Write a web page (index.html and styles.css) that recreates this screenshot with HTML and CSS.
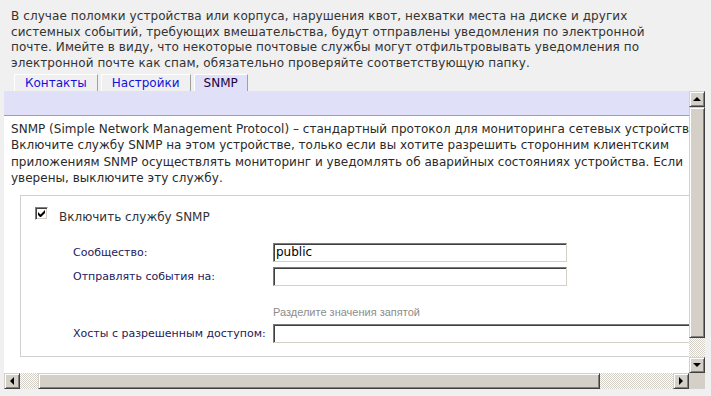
FILE: index.html
```html
<!DOCTYPE html>
<html lang="ru">
  <head>
    <meta charset="UTF-8" />
    <meta name="viewport" content="width=device-width, initial-scale=1.0" />
    <title>Уведомления</title>
    <link rel="stylesheet" href="styles.css">
  </head>
  <body>
    <p class="intro">
      В случае поломки устройства или корпуса, нарушения квот, нехватки места на диске и других<br />
      системных событий, требующих вмешательства, будут отправлены уведомления по электронной<br />
      почте. Имейте в виду, что некоторые почтовые службы могут отфильтровывать уведомления по<br />
      электронной почте как спам, обязательно проверяйте соответствующую папку.
    </p>

    <ul class="tabs">
      <li class="tab">Контакты</li>
      <li class="tab">Настройки</li>
      <li class="tab active">SNMP</li>
    </ul>

    <div class="frame">
      <div class="viewport">
        <div class="content">
          <div class="toolbar"></div>
          <p class="desc">
            SNMP (Simple Network Management Protocol) – стандартный протокол для мониторинга сетевых устройств.<br />
            Включите службу SNMP на этом устройстве, только если вы хотите разрешить сторонним клиентским<br />
            приложениям SNMP осуществлять мониторинг и уведомлять об аварийных состояниях устройства. Если<br />
            уверены, выключите эту службу.
          </p>

          <div class="box">
            <div class="enable">
              <span class="check">
                <svg width="7" height="7" viewBox="0 0 7 7">
                  <path d="M0 2v3l2 2h1l4-4V0L2.5 4.5z" fill="#000" />
                </svg>
              </span>
              <span class="enable_label">Включить службу SNMP</span>
            </div>

            <div class="fields">
              <label for="community">Сообщество:</label>
              <input type="text" id="community" value="public" />

              <label for="trap">Отправлять события на:</label>
              <input type="text" id="trap" />

              <span></span>
              <span class="hint">Разделите значения запятой</span>

              <label for="hosts">Хосты с разрешенным доступом:</label>
              <input type="text" id="hosts" class="wide" />
            </div>
          </div>
        </div>
      </div>

      <div class="vscroll">
        <div class="btn"><span class="arrow up"></span></div>
        <div class="thumb v"></div>
        <div class="track"></div>
        <div class="btn"><span class="arrow down"></span></div>
      </div>

      <div class="hscroll">
        <div class="btn"><span class="arrow left"></span></div>
        <div class="track first"></div>
        <div class="thumb h"></div>
        <div class="track"></div>
        <div class="btn"><span class="arrow right"></span></div>
      </div>

      <div class="corner"></div>
    </div>
  </body>
</html>
```

FILE: styles.css
```css
* {
  margin: 0;
  padding: 0;
  box-sizing: border-box;
}

body {
  font-family: "DejaVu Sans", Verdana, sans-serif;
  font-size: 12px;
  background-color: #f0f0f0;
  color: #333;
}

.intro {
  padding: 9px 0 0 11px;
  line-height: 15.7px;
  letter-spacing: 0.08px;
  white-space: nowrap;
  margin-bottom: 2px;
}

.tabs {
  list-style: none;
  display: flex;
  padding-left: 14px;
  height: 17px;
}

.tab {
  height: 17px;
  padding: 1px 10px 0;
  margin-right: 3px;
  line-height: 15px;
  color: #1010e0;
  border-top: 1px solid #fff;
  border-left: 1px solid #fff;
  border-right: 1px solid #a0a0a0;
}

.tab.active {
  padding: 1px 9px 0;
  background-color: #e0e0f8;
  color: #200040;
}

.frame {
  margin-left: 4px;
  width: 701px;
  height: 298px;
  display: grid;
  grid-template-columns: 685px 16px;
  grid-template-rows: 282px 16px;
  background-color: #fff;
}

.viewport {
  overflow: hidden;
}

.content {
  width: 780px;
}

.toolbar {
  height: 25px;
  background-color: #e0e0f8;
  border-bottom: 1px solid #a0a0a8;
}

.desc {
  padding: 5px 0 0 7px;
  line-height: 16.5px;
  letter-spacing: 0.02px;
  white-space: nowrap;
  color: #2a2a2a;
}

.box {
  margin: 8px 0 0 16px;
  width: 740px;
  border: 1px solid #d0d0d0;
  padding: 11px 0 13px 14px;
}

.enable {
  display: flex;
  align-items: flex-start;
}

.check {
  width: 13px;
  height: 13px;
  display: flex;
  align-items: center;
  justify-content: center;
  background-color: #fff;
  border: 1px solid;
  border-color: #808080 #fff #fff #808080;
  box-shadow: inset 1px 1px #404040, inset -1px -1px #d4d0c8;
}

.enable_label {
  margin-left: 11px;
  padding-top: 3px;
  line-height: 14px;
  color: #333;
}

.fields {
  margin: 19px 0 0 38px;
  display: grid;
  grid-template-columns: 200px 294px;
  row-gap: 5px;
  align-items: center;
}

.fields label {
  font-size: 11px;
  color: #24205c;
}

.fields input {
  height: 19px;
  width: 294px;
  padding: 0 2px;
  font-family: "DejaVu Sans", Verdana, sans-serif;
  font-size: 12px;
  color: #000;
  background-color: #fff;
  border: 1px solid;
  border-color: #7a7a7a #d4d0c8 #d4d0c8 #7a7a7a;
  box-shadow: inset 1px 1px #404040;
  outline: none;
}

.fields input.wide {
  width: 460px;
}

.hint {
  padding-top: 15px;
  line-height: 13px;
  font-family: "Liberation Sans", Arial, sans-serif;
  font-size: 11px;
  color: #8c8c8c;
}

/* classic scrollbars */
.vscroll,
.hscroll {
  display: flex;
  background-color: #d4d0c8;
}

.vscroll {
  flex-direction: column;
}

.btn,
.thumb {
  background-color: #d4d0c8;
  border: 1px solid;
  border-color: #d4d0c8 #404040 #404040 #d4d0c8;
  box-shadow: inset 1px 1px #fff, inset -1px -1px #808080;
}

.btn {
  width: 16px;
  height: 16px;
  flex: none;
  display: flex;
  align-items: center;
  justify-content: center;
}

.thumb.v {
  height: 231px;
}

.thumb.h {
  width: 562px;
}

.track {
  flex: 1;
  background: repeating-conic-gradient(#d4d0c8 0 25%, #fff 0 50%) 0 0 / 2px 2px;
}

.track.first {
  flex: none;
  width: 18px;
}

.arrow {
  width: 0;
  height: 0;
  border: 4px solid transparent;
}

.arrow.up {
  border-bottom-color: #000;
  border-top-width: 0;
}

.arrow.down {
  border-top-color: #000;
  border-bottom-width: 0;
}

.arrow.left {
  border-right-color: #000;
  border-left-width: 0;
}

.arrow.right {
  border-left-color: #000;
  border-right-width: 0;
}

.corner {
  background-color: #d4d0c8;
}
```
